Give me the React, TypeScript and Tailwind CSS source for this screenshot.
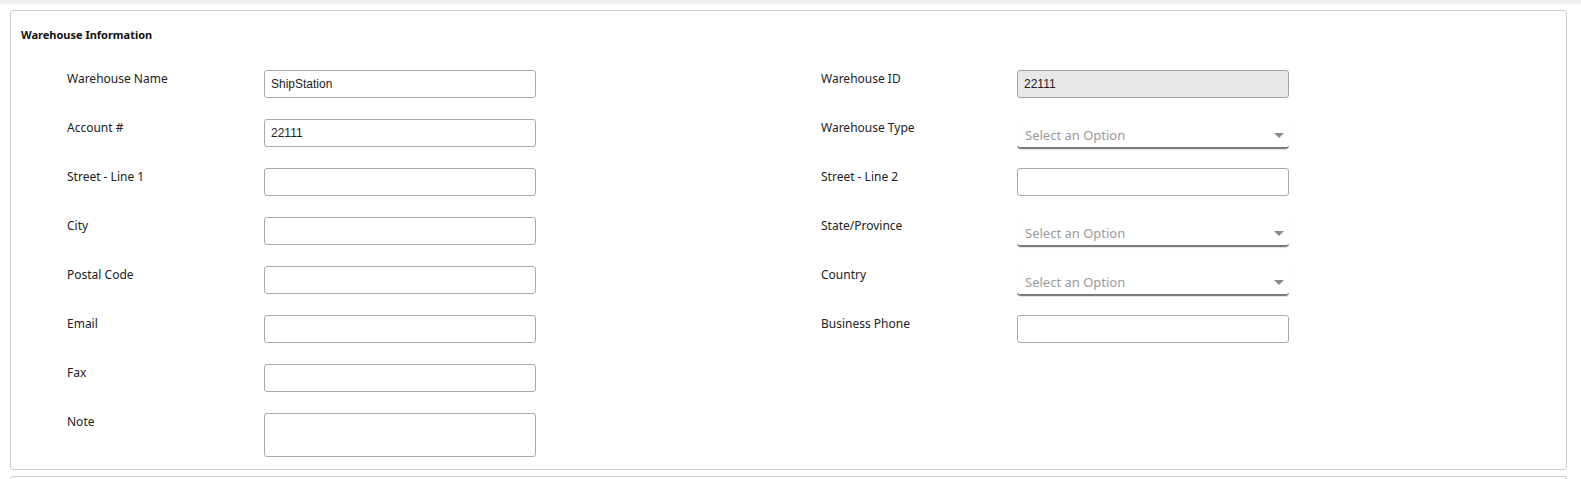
import React from "react";

type Field = {
    label: string;
    kind: "text" | "disabled" | "select" | "textarea";
    value?: string;
};

const leftFields: Field[] = [
    { label: "Warehouse Name", kind: "text", value: "ShipStation" },
    { label: "Account #", kind: "text", value: "22111" },
    { label: "Street - Line 1", kind: "text" },
    { label: "City", kind: "text" },
    { label: "Postal Code", kind: "text" },
    { label: "Email", kind: "text" },
    { label: "Fax", kind: "text" },
    { label: "Note", kind: "textarea" },
];

const rightFields: Field[] = [
    { label: "Warehouse ID", kind: "disabled", value: "22111" },
    { label: "Warehouse Type", kind: "select" },
    { label: "Street - Line 2", kind: "text" },
    { label: "State/Province", kind: "select" },
    { label: "Country", kind: "select" },
    { label: "Business Phone", kind: "text" },
];

const labelFont = { fontFamily: '"Noto Sans", "Open Sans", sans-serif' };

const Control: React.FC<{ field: Field }> = ({ field }) => {
    if (field.kind === "select") {
        return (
            <div className="relative mb-[-2px] flex h-[30px] w-[272px] items-center rounded-b-[4px] border-b-2 border-[#7d7d7d] pl-[8px] pt-[3px] shadow-[0_1px_1px_rgba(0,0,0,0.12)]">
                <span className="text-[13px] leading-[18px] text-[#9a9a9a]" style={labelFont}>Select an Option</span>
                <span className="absolute right-[5px] top-[14px] h-0 w-0 border-x-[5px] border-t-[5px] border-x-transparent border-t-[#8a8a8a]" />
            </div>
        );
    }
    if (field.kind === "textarea") {
        return (
            <textarea
                className="h-[44px] w-[272px] resize-none rounded-[3px] border border-[#a9a9a9] bg-white px-[6px] py-[4px] text-[12px] text-[#222] outline-none"
                style={{ fontFamily: '"Liberation Sans", Arial, sans-serif' }}
                defaultValue=""
            />
        );
    }
    return (
        <input
            readOnly
            value={field.value || ""}
            className={`h-[28px] w-[272px] rounded-[3px] border px-[6px] text-[12px] text-[#222] outline-none ${field.kind === "disabled" ? "border-[#a3a3a3] bg-[#e8e8e8]" : "border-[#a9a9a9] bg-white"}`}
            style={{ fontFamily: '"Liberation Sans", Arial, sans-serif' }}
        />
    );
};

const FieldColumn: React.FC<{ fields: Field[]; labelWidth: string }> = ({ fields, labelWidth }) => {
    return (
        <div className="flex flex-col gap-[21px]">
            {fields.map((f, i) => (
                <div key={i} className="flex items-start">
                    <div className={`${labelWidth} text-[12px] leading-[18px] text-[#222]`} style={labelFont}>
                        {f.label}
                    </div>
                    <Control field={f} />
                </div>
            ))}
        </div>
    );
};

const App: React.FC = () => {
    return (
        <div className="min-h-screen bg-white">
            <div className="h-[4px] bg-[#f0f1f3]" />
            <div className="pl-[10px] pr-[14px] pt-[6px]">
                <div className="rounded-[3px] border border-[#c6ced6] pb-[12px]">
                    <div className="px-[10px] pt-[15px] text-[11px] font-bold leading-[18px] text-[#111]" style={labelFont}>
                        Warehouse Information
                    </div>
                    <div className="mt-[26px] flex pl-[56px]">
                        <FieldColumn fields={leftFields} labelWidth="w-[197px]" />
                        <div className="ml-[285px]">
                            <FieldColumn fields={rightFields} labelWidth="w-[196px]" />
                        </div>
                    </div>
                </div>
                <div className="mt-[6px] h-[10px] rounded-t-[3px] border border-b-0 border-[#c6ced6]" />
            </div>
        </div>
    );
};

export default App;
